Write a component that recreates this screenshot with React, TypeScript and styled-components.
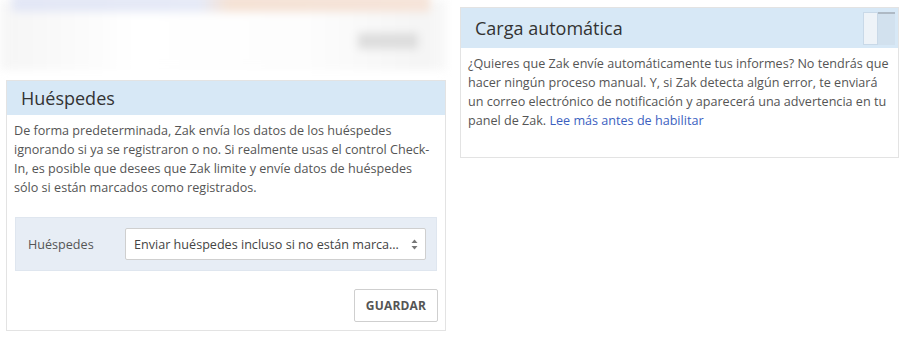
import React from "react";
import styled, { createGlobalStyle } from "styled-components";

const GlobalStyle = createGlobalStyle`
  html, body {
    margin: 0;
    padding: 0;
    background: #ffffff;
  }
  body {
    font-family: "Open Sans", "Noto Sans", sans-serif;
    color: #555555;
  }
`;

const Page = styled.div`
  width: 907px;
  height: 337px;
  overflow: hidden;
  display: grid;
  grid-template-columns: 446px 1fr;
  column-gap: 14px;
  padding-right: 8px;
  box-sizing: border-box;
`;

const LeftColumn = styled.div`
  display: flex;
  flex-direction: column;
  gap: 10px;
`;

const RightColumn = styled.div`
  padding-top: 7px;
`;

// blurred panel peeking at the top (content out of focus)
const BlurredPanel = styled.div`
  height: 70px;
  filter: blur(4px);
  background: #f7f7f7;
  display: flex;
  flex-direction: column;
  padding: 0 16px 0 12px;
`;

const BlurStrip = styled.div`
  height: 18px;
  margin-top: -6px;
  background: linear-gradient(
    to right,
    #e3e7f6 0%,
    #e6eaf7 45%,
    #f5e2d5 52%,
    #f6e4d9 100%
  );
`;

const BlurBody = styled.div`
  flex: 1;
  display: flex;
  justify-content: flex-end;
  align-items: center;
  background: linear-gradient(to right, #f6f6f6, #ffffff 30%, #fdfdfd 70%, #f4f4f4);
`;

const BlurButton = styled.div`
  width: 60px;
  height: 16px;
  background: #dddddd;
  margin-right: 12px;
`;

const Panel = styled.div<{ $inset?: number }>`
  border: 1px solid #e3e3e3;
  background: #fff;
  margin-left: ${(p) => p.$inset ?? 0}px;
`;

const PanelHeader = styled.div<{ $tall?: boolean }>`
  background: #d7e8f6;
  display: flex;
  align-items: center;
  justify-content: space-between;
  height: ${(p) => (p.$tall ? 40 : 34)}px;
  padding: 0 3px 0 14px;
`;

const PanelTitle = styled.h3`
  margin: 0;
  font-size: 18px;
  font-weight: 400;
  color: #333;
`;

const PanelBody = styled.div<{ $bottom?: number }>`
  padding: 6px 7px ${(p) => p.$bottom ?? 8}px 7px;
`;

const Text = styled.p`
  margin: 0;
  font-size: 12.6px;
  line-height: 19px;
  color: #555;
`;

const Link = styled.a`
  color: #3c5fbf;
  text-decoration: none;
`;

const FormGroup = styled.div`
  margin: 20px 1px 0 1px;
  background: #e7edf5;
  border: 1px solid #dfe6ef;
  padding: 10px 10px 10px 12px;
  display: flex;
  align-items: center;
`;

const Label = styled.label`
  width: 97px;
  flex-shrink: 0;
  font-size: 12.6px;
  color: #555;
`;

const SelectBox = styled.div`
  flex: 1;
  min-width: 0;
  height: 32px;
  box-sizing: border-box;
  background: #fff;
  border: 1px solid #cfcfcf;
  border-radius: 2px;
  display: flex;
  align-items: center;
  padding: 0 7px 0 8px;
  font-size: 12.6px;
  color: #444;
`;

const SelectText = styled.span`
  flex: 1;
  min-width: 0;
  white-space: nowrap;
  overflow: hidden;
  text-overflow: ellipsis;
  padding-right: 8px;
`;

const Actions = styled.div`
  display: flex;
  justify-content: flex-end;
  margin-top: 18px;
  padding-right: 0;
`;

const Button = styled.button`
  width: 84px;
  height: 33px;
  background: #fff;
  border: 1px solid #cfcfcf;
  border-radius: 2px;
  font-family: "Open Sans", sans-serif;
  font-size: 12px;
  font-weight: 700;
  color: #555;
  letter-spacing: 0.2px;
`;

const Toggle = styled.div`
  width: 32px;
  height: 33px;
  display: flex;
  filter: blur(0.6px);
`;

const ToggleKnob = styled.div`
  width: 15px;
  background: #eef3f8;
  border: 1px solid #c9d9e8;
  box-sizing: border-box;
`;

const ToggleTrack = styled.div`
  flex: 1;
  background: #d2e1ee;
  border-top: 2px solid #aeb9c4;
`;

function UpDownArrow() {
  return (
    <svg width="7" height="11" viewBox="0 0 7 11">
      <path d="M3.5 0.5 L6.5 4 H0.5 Z" fill="#777" />
      <path d="M3.5 10.5 L6.5 7 H0.5 Z" fill="#777" />
    </svg>
  );
}

export default function App() {
  return (
    <>
      <GlobalStyle />
      <Page>
        <LeftColumn>
          <BlurredPanel>
            <BlurStrip />
            <BlurBody>
              <BlurButton />
            </BlurBody>
          </BlurredPanel>
          <Panel $inset={6}>
            <PanelHeader>
              <PanelTitle>Huéspedes</PanelTitle>
            </PanelHeader>
            <PanelBody>
              <Text>
                De forma predeterminada, Zak envía los datos de los huéspedes
                ignorando si ya se registraron o no. Si realmente usas el
                control Check-In, es posible que desees que Zak limite y envíe
                datos de huéspedes sólo si están marcados como registrados.
              </Text>
              <FormGroup>
                <Label>Huéspedes</Label>
                <SelectBox>
                  <SelectText>
                    Enviar huéspedes incluso si no están marcados como
                    registrados
                  </SelectText>
                  <UpDownArrow />
                </SelectBox>
              </FormGroup>
              <Actions>
                <Button>GUARDAR</Button>
              </Actions>
            </PanelBody>
          </Panel>
        </LeftColumn>
        <RightColumn>
          <Panel>
            <PanelHeader $tall>
              <PanelTitle>Carga automática</PanelTitle>
              <Toggle>
                <ToggleKnob />
                <ToggleTrack />
              </Toggle>
            </PanelHeader>
            <PanelBody $bottom={27}>
              <Text>
                ¿Quieres que Zak envíe automáticamente tus informes? No tendrás
                que hacer ningún proceso manual. Y, si Zak detecta algún error,
                te enviará un correo electrónico de notificación y aparecerá una
                advertencia en tu panel de Zak.{" "}
                <Link href="#">Lee más antes de habilitar</Link>
              </Text>
            </PanelBody>
          </Panel>
        </RightColumn>
      </Page>
    </>
  );
}
